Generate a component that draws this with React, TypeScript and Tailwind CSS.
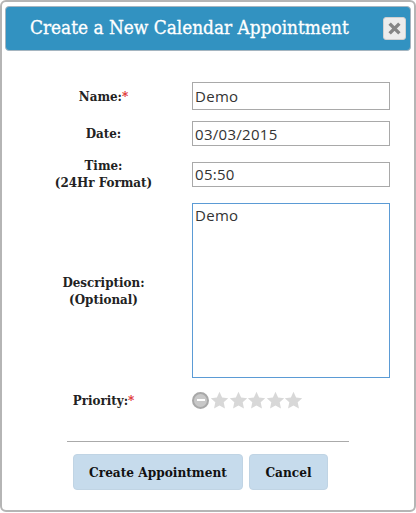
const labelCls = "w-[172px] shrink-0 pl-px text-center text-[13.25px] leading-[17px] font-bold text-[#222]"
const inputCls =
  "ml-[3px] block w-[198px] border border-[#a9a9a9] bg-white px-[2px] text-[15px] tracking-[0.3px] text-[#333] outline-none font-['Open_Sans',sans-serif]"

function Star() {
  return (
    <svg viewBox="0 0 24 24" className="h-[19px] w-[19px] -mr-[0.5px] shrink-0" fill="#d8d8d8">
      <path d="M12 1l3.3 7.2 7.7.9-5.7 5.2 1.6 7.7L12 18.2l-6.9 3.8 1.6-7.7L1 9.1l7.7-.9z" />
    </svg>
  )
}

export default function App() {
  return (
    <div className="h-[513px] w-[416px] bg-white font-['DejaVu_Serif_Condensed','Liberation_Serif',serif]">
      <div className="h-[512px] rounded-[6px] border-2 border-[#b5b5b5] px-[3px] pt-[4px]">
        <div className="flex h-[45px] items-center rounded-[4px] border border-[#a5b5c0] bg-[#3292c1] pl-[24px] pr-[4px]">
          <h1 className="flex-1 text-[18.85px] font-normal text-white [-webkit-text-stroke:0.3px_white]">Create a New Calendar Appointment</h1>
          <button className="flex h-[23px] w-[23px] items-center justify-center rounded-[3px] border border-[#d0d0d0] bg-[#ececec]">
            <svg viewBox="0 0 16 16" className="h-[13px] w-[13px]" stroke="#858585" strokeWidth="4.2" strokeLinecap="square">
              <path d="M3.5 3.5l9 9M12.5 3.5l-9 9" />
            </svg>
          </button>
        </div>

        <div className="ml-[12px] mt-[31px] flex flex-col">
          <div className="flex items-center">
            <label className={labelCls}>
              Name:<span className="text-[#e03030]">*</span>
            </label>
            <input readOnly value="Demo" className={inputCls + " h-[28px]"} />
          </div>
          <div className="mt-[11px] flex items-center">
            <label className={labelCls}>Date:</label>
            <input readOnly value="03/03/2015" className={inputCls + " h-[25px]"} />
          </div>
          <div className="mt-[11px] flex items-center">
            <label className={labelCls}>
              Time:
              <br />
              (24Hr Format)
            </label>
            <input readOnly value="05:50" className={inputCls + " h-[25px]"} />
          </div>
          <div className="mt-[12px] flex items-center">
            <label className={labelCls}>
              Description:
              <br />
              (Optional)
            </label>
            <textarea
              readOnly
              value="Demo"
              className="ml-[3px] block h-[175px] w-[198px] resize-none border border-[#5b9bd5] bg-white px-[2px] py-0 font-['Open_Sans',sans-serif] text-[15px] tracking-[0.3px] text-[#333] outline-none"
            />
          </div>
          <div className="mt-[12px] flex h-[20px] items-center">
            <label className={labelCls}>
              Priority:<span className="text-[#e03030]">*</span>
            </label>
            <div className="ml-[3px] flex items-center">
              <span className="mr-px flex h-[17px] w-[17px] items-center justify-center rounded-full border-2 border-[#a8a8a8] bg-[#c8c8c8]">
                <span className="h-[2px] w-[8px] bg-white" />
              </span>
              <Star />
              <Star />
              <Star />
              <Star />
              <Star />
            </div>
          </div>
        </div>

        <div className="ml-[62px] mt-[31px] h-px w-[282px] bg-[#aaaaaa]" />

        <div className="ml-[68px] mt-[12px] flex gap-[6px]">
          <button className="h-[36px] w-[170px] rounded-[4px] border border-[#c0d4e4] bg-[#c6dbec] pt-px text-[13.5px] font-bold text-[#111]">
            Create Appointment
          </button>
          <button className="h-[36px] w-[79px] rounded-[4px] border border-[#c0d4e4] bg-[#c6dbec] pt-px text-[13.5px] font-bold text-[#111]">
            Cancel
          </button>
        </div>
      </div>
    </div>
  )
}
